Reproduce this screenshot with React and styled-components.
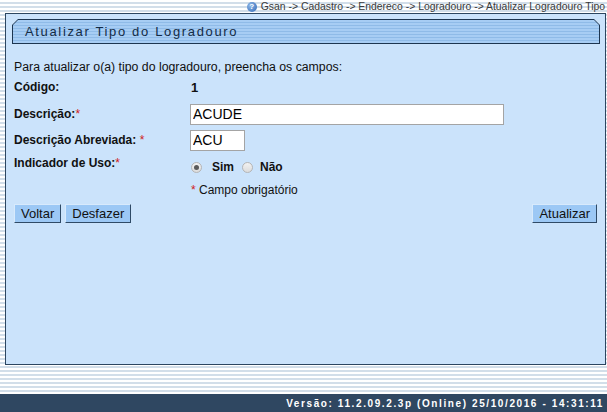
import React from "react";
import styled, { createGlobalStyle } from "styled-components";

const Global = createGlobalStyle`
  html, body { margin: 0; padding: 0; }
  body {
    font-family: "Liberation Sans", Arial, sans-serif;
    background: repeating-linear-gradient(to bottom, #ffffff 0px, #ffffff 2px, #d2dee9 2px, #d2dee9 4px);
  }
`;

const Page = styled.div`
  height: 412px;
  display: flex;
  flex-direction: column;
`;

const Breadcrumb = styled.div`
  height: 13px;
  display: flex;
  justify-content: flex-end;
  align-items: center;
  gap: 4px;
  padding-right: 2px;
  font-size: 10.4px;
  color: #3a3a3a;
  white-space: nowrap;
`;

const HelpIcon = styled.span`
  width: 10px;
  height: 10px;
  border-radius: 50%;
  background: radial-gradient(circle at 35% 35%, #8fb7e8, #2f67b5);
  color: #fff;
  font-size: 8px;
  font-weight: bold;
  display: inline-flex;
  align-items: center;
  justify-content: center;
  line-height: 1;
`;

const Panel = styled.div`
  margin: 0 1px 0 5px;
  height: 352px;
  box-sizing: border-box;
  border: 1px solid #2c4660;
  background: #cbe3fb;
  display: flex;
  flex-direction: column;
`;

const TabOuter = styled.div`
  margin: 5px 5px 0 6px;
  height: 25px;
  background: #1d3550;
  clip-path: polygon(6px 0, calc(100% - 6px) 0, 100% 6px, 100% 100%, 0 100%, 0 6px);
  padding: 1px;
  box-sizing: border-box;
`;

const TabInner = styled.div`
  height: 100%;
  background: repeating-linear-gradient(to bottom, #a7cdf4 0px, #a7cdf4 2px, #8fbbe8 2px, #8fbbe8 3px);
  clip-path: polygon(5px 0, calc(100% - 5px) 0, 100% 5px, 100% 100%, 0 100%, 0 5px);
  display: flex;
  align-items: center;
  padding-left: 12px;
  font-size: 13px;
  letter-spacing: 1.65px;
  color: #132b46;
`;

const Content = styled.div`
  padding-left: 8px;
  padding-right: 8px;
  display: flex;
  flex-direction: column;
  font-size: 12px;
  color: #111;
`;

const Intro = styled.div`
  margin-top: 15px;
  line-height: 16px;
  font-size: 12.3px;
`;

const Row = styled.div`
  display: flex;
  align-items: ${(p) => (p.$top ? "flex-start" : "center")};
  margin-top: ${(p) => p.$mt}px;
  height: ${(p) => p.$h}px;
`;

const Label = styled.div`
  width: 176px;
  flex: none;
  font-weight: bold;
  line-height: 16px;
`;

const Req = styled.span`
  color: #d02020;
  font-weight: normal;
`;

const Value = styled.div`
  font-weight: bold;
  font-size: 13px;
  padding-left: 1px;
`;

const Input = styled.input`
  box-sizing: border-box;
  width: ${(p) => p.$w}px;
  height: 21px;
  border: 1px solid #a4a4a4;
  background: #fff;
  font-family: "Liberation Sans", Arial, sans-serif;
  font-size: 14px;
  color: #000;
  padding: 0 2px;
  margin: 0;
  outline: none;
`;

const Radios = styled.div`
  display: flex;
  align-items: center;
  margin-top: 5px;
  padding-left: 1px;
  font-weight: bold;
  font-size: 12px;
`;

const RadioCircle = styled.span`
  width: 11px;
  height: 11px;
  box-sizing: border-box;
  border-radius: 50%;
  border: 1px solid #b5b5b5;
  background: linear-gradient(#f2f2f2, #dcdcdc);
  display: inline-flex;
  align-items: center;
  justify-content: center;
  margin-right: ${(p) => p.$mr}px;
  &::after {
    content: "";
    width: 5px;
    height: 5px;
    border-radius: 50%;
    background: ${(p) => (p.$checked ? "#5a5a5a" : "transparent")};
  }
`;

const RadioText = styled.span`
  margin-right: 8px;
`;

const Hint = styled.div`
  padding-left: 1px;
  line-height: 16px;
  margin-top: 2px;
`;

const ButtonBar = styled.div`
  display: flex;
  justify-content: space-between;
  margin-top: 7px;
`;

const Group = styled.div`
  display: flex;
  gap: 4px;
`;

const Button = styled.button`
  height: 19px;
  box-sizing: border-box;
  padding: 0 6px;
  margin: 0;
  font-family: "Liberation Sans", Arial, sans-serif;
  font-size: 13px;
  color: #111;
  background: #9cc8f5;
  border: 1px solid;
  border-color: #d8eafc #2f4a66 #2f4a66 #d8eafc;
  line-height: 17px;
`;

const Spacer = styled.div`
  flex: 1;
`;

const Footer = styled.div`
  height: 18px;
  background: #2f4761;
  color: #fff;
  font-weight: bold;
  font-size: 10px;
  letter-spacing: 1.6px;
  display: flex;
  align-items: center;
  justify-content: flex-end;
  padding-right: 3px;
  white-space: nowrap;
`;

export default function App() {
  return (
    <>
      <Global />
      <Page>
        <Breadcrumb>
          <HelpIcon>?</HelpIcon>
          <span>Gsan -&gt; Cadastro -&gt; Endereco -&gt; Logradouro -&gt; Atualizar Logradouro Tipo</span>
        </Breadcrumb>
        <Panel>
          <TabOuter>
            <TabInner>Atualizar Tipo do Logradouro</TabInner>
          </TabOuter>
          <Content>
            <Intro>Para atualizar o(a) tipo do logradouro, preencha os campos:</Intro>
            <Row $mt={4} $h={16}>
              <Label>Código:</Label>
              <Value>1</Value>
            </Row>
            <Row $mt={8} $h={22}>
              <Label>
                Descrição:<Req>*</Req>
              </Label>
              <Input $w={314} defaultValue="ACUDE" />
            </Row>
            <Row $mt={4} $h={22}>
              <Label>
                Descrição Abreviada: <Req>*</Req>
              </Label>
              <Input $w={55} defaultValue="ACU" />
            </Row>
            <Row $mt={4} $h={22} $top>
              <Label>
                Indicador de Uso:<Req>*</Req>
              </Label>
              <Radios>
                <RadioCircle $checked $mr={10} />
                <RadioText>Sim</RadioText>
                <RadioCircle $mr={7} />
                <span>Não</span>
              </Radios>
            </Row>
            <Row $mt={4} $h={16}>
              <Label />
              <Hint>
                <Req>*</Req> Campo obrigatório
              </Hint>
            </Row>
            <ButtonBar>
              <Group>
                <Button>Voltar</Button>
                <Button>Desfazer</Button>
              </Group>
              <Button>Atualizar</Button>
            </ButtonBar>
          </Content>
        </Panel>
        <Spacer />
        <Footer>Versão: 11.2.09.2.3p (Online) 25/10/2016 - 14:31:11</Footer>
      </Page>
    </>
  );
}
